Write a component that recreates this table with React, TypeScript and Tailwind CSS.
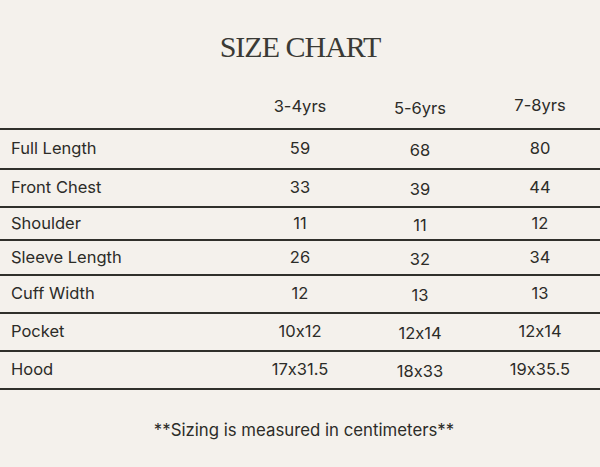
const cols = ["3-4yrs", "5-6yrs", "7-8yrs"];

const rows: { label: string; values: string[]; h: string }[] = [
  { label: "Full Length", values: ["59", "68", "80"], h: "h-[40px]" },
  { label: "Front Chest", values: ["33", "39", "44"], h: "h-[38px]" },
  { label: "Shoulder", values: ["11", "11", "12"], h: "h-[33px]" },
  { label: "Sleeve Length", values: ["26", "32", "34"], h: "h-[35px]" },
  { label: "Cuff Width", values: ["12", "13", "13"], h: "h-[38px]" },
  { label: "Pocket", values: ["10x12", "12x14", "12x14"], h: "h-[38px]" },
  { label: "Hood", values: ["17x31.5", "18x33", "19x35.5"], h: "h-[38px]" },
];

// no contextual alternates, otherwise Inter turns 10x12 into 10×12
const sans = { fontFamily: "Inter, 'Liberation Sans', sans-serif", fontFeatureSettings: "'calt' 0" };

export default function App() {
  return (
    <div className="w-[600px] h-[467px] bg-[#f4f1ec] text-[#2c2c28] flex flex-col" style={sans}>
      <div className="h-[94px] flex items-center justify-center">
        <h1
          className="text-[30px] leading-none tracking-[-1px] text-[#3a3a35]"
          style={{ fontFamily: "'Liberation Serif', serif", fontWeight: 400 }}
        >
          SIZE CHART
        </h1>
      </div>

      {/* column headings */}
      <div className="h-[34px] grid grid-cols-[240px_120px_120px_120px] text-[16.5px] leading-[24px]">
        <div />
        {cols.map((c, i) => (
          <div key={c} className={`text-center ${i === 1 ? "pt-[2px]" : i === 2 ? "-mt-[1px]" : ""}`}>
            {c}
          </div>
        ))}
      </div>

      {rows.map((r) => (
        <div
          key={r.label}
          className={`${r.h} border-t-2 border-[#30302b] grid grid-cols-[240px_120px_120px_120px] items-center text-[16.5px] leading-[24px]`}
        >
          <div className="pl-[11px] -mt-[2px]">{r.label}</div>
          {r.values.map((v, i) => (
            <div key={i} className={`text-center ${i === 1 ? "pt-[2px]" : "-mt-[2px]"}`}>
              {v}
            </div>
          ))}
        </div>
      ))}
      <div className="border-t-2 border-[#30302b]" />

      <div className="flex-1 flex items-center justify-center pt-1 pl-[8px] text-[16.8px]">
        **Sizing is measured in centimeters**
      </div>
    </div>
  );
}
